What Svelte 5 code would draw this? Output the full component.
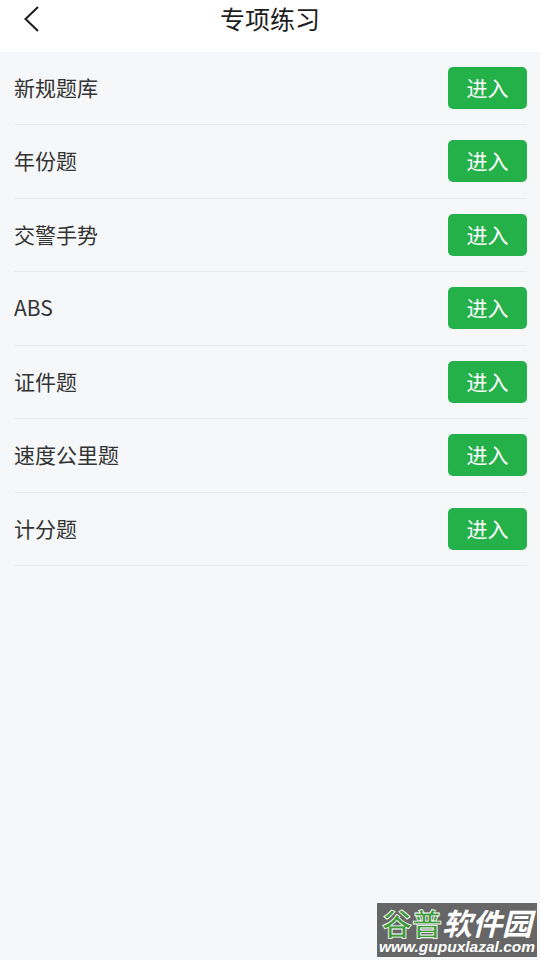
<script>
  const items = ['新规题库', '年份题', '交警手势', 'ABS', '证件题', '速度公里题', '计分题'];
</script>

<div class="page">
  <header class="top-bar">
    <button class="back" aria-label="返回">
      <svg width="18" height="28" viewBox="0 0 18 28" fill="none">
        <path d="M16 2 L3.5 14 L16 26" stroke="#1c1c1c" stroke-width="2" />
      </svg>
    </button>
    <h1>专项练习</h1>
  </header>

  <ul class="list">
    {#each items as item}
      <li class="row">
        <span class="name">{item}</span>
        <button class="enter">进入</button>
      </li>
    {/each}
  </ul>

  <div class="watermark">
    <div class="wm-title">
      <span class="wm-green">谷普</span><span class="wm-white">软件园</span>
    </div>
    <div class="wm-url">www.gupuxlazal.com</div>
  </div>
</div>

<style>
:global(body) {
  margin: 0;
  background: #f5f7f9;
}
.page {
  position: relative;
  height: 960px;
  overflow: hidden;
  background: #f5f7f9;
  font-family: "Noto Sans CJK SC", "Liberation Sans", sans-serif;
}
.top-bar {
  height: 51.5px;
  background: #fff;
  display: flex;
  align-items: flex-start;
  justify-content: center;
  position: relative;
}
.top-bar h1 {
  margin: 0;
  padding-top: 1px;
  font-size: 25px;
  line-height: 34px;
  font-weight: 400;
  color: #1d1d1d;
}
.back {
  position: absolute;
  left: 22px;
  top: 5px;
  padding: 0;
  border: 0;
  background: none;
  line-height: 0;
}
.list {
  margin: 0;
  padding: 0 13px 0 14px;
  list-style: none;
}
.row {
  box-sizing: border-box;
  height: 73.5px;
  display: flex;
  align-items: center;
  justify-content: space-between;
  border-bottom: 1px solid #e9ebed;
}
.name {
  margin-top: -2px;
  font-size: 21px;
  color: #333;
}
.enter {
  width: 79px;
  height: 42px;
  padding: 0 0 2px;
  border: 0;
  border-radius: 5px;
  background: #25b14a;
  color: #fff;
  font-family: inherit;
  font-size: 21px;
  line-height: 40px;
}
.watermark {
  position: absolute;
  left: 377px;
  top: 903px;
  width: 160px;
  height: 54px;
  padding-top: 3px;
  box-sizing: border-box;
  background: #666;
}
.wm-title {
  display: flex;
  justify-content: center;
  font-size: 30px;
  line-height: 33px;
  font-weight: 700;
  white-space: nowrap;
}
.wm-green {
  color: #3f9a3c;
  -webkit-text-stroke: 0.8px #fff;
}
.wm-white {
  color: #fff;
  font-style: italic;
}
.wm-url {
  font-family: "Liberation Sans", sans-serif;
  font-size: 15.5px;
  line-height: 16px;
  font-weight: 700;
  font-style: italic;
  color: #fff;
  text-align: center;
  white-space: nowrap;
}
</style>
